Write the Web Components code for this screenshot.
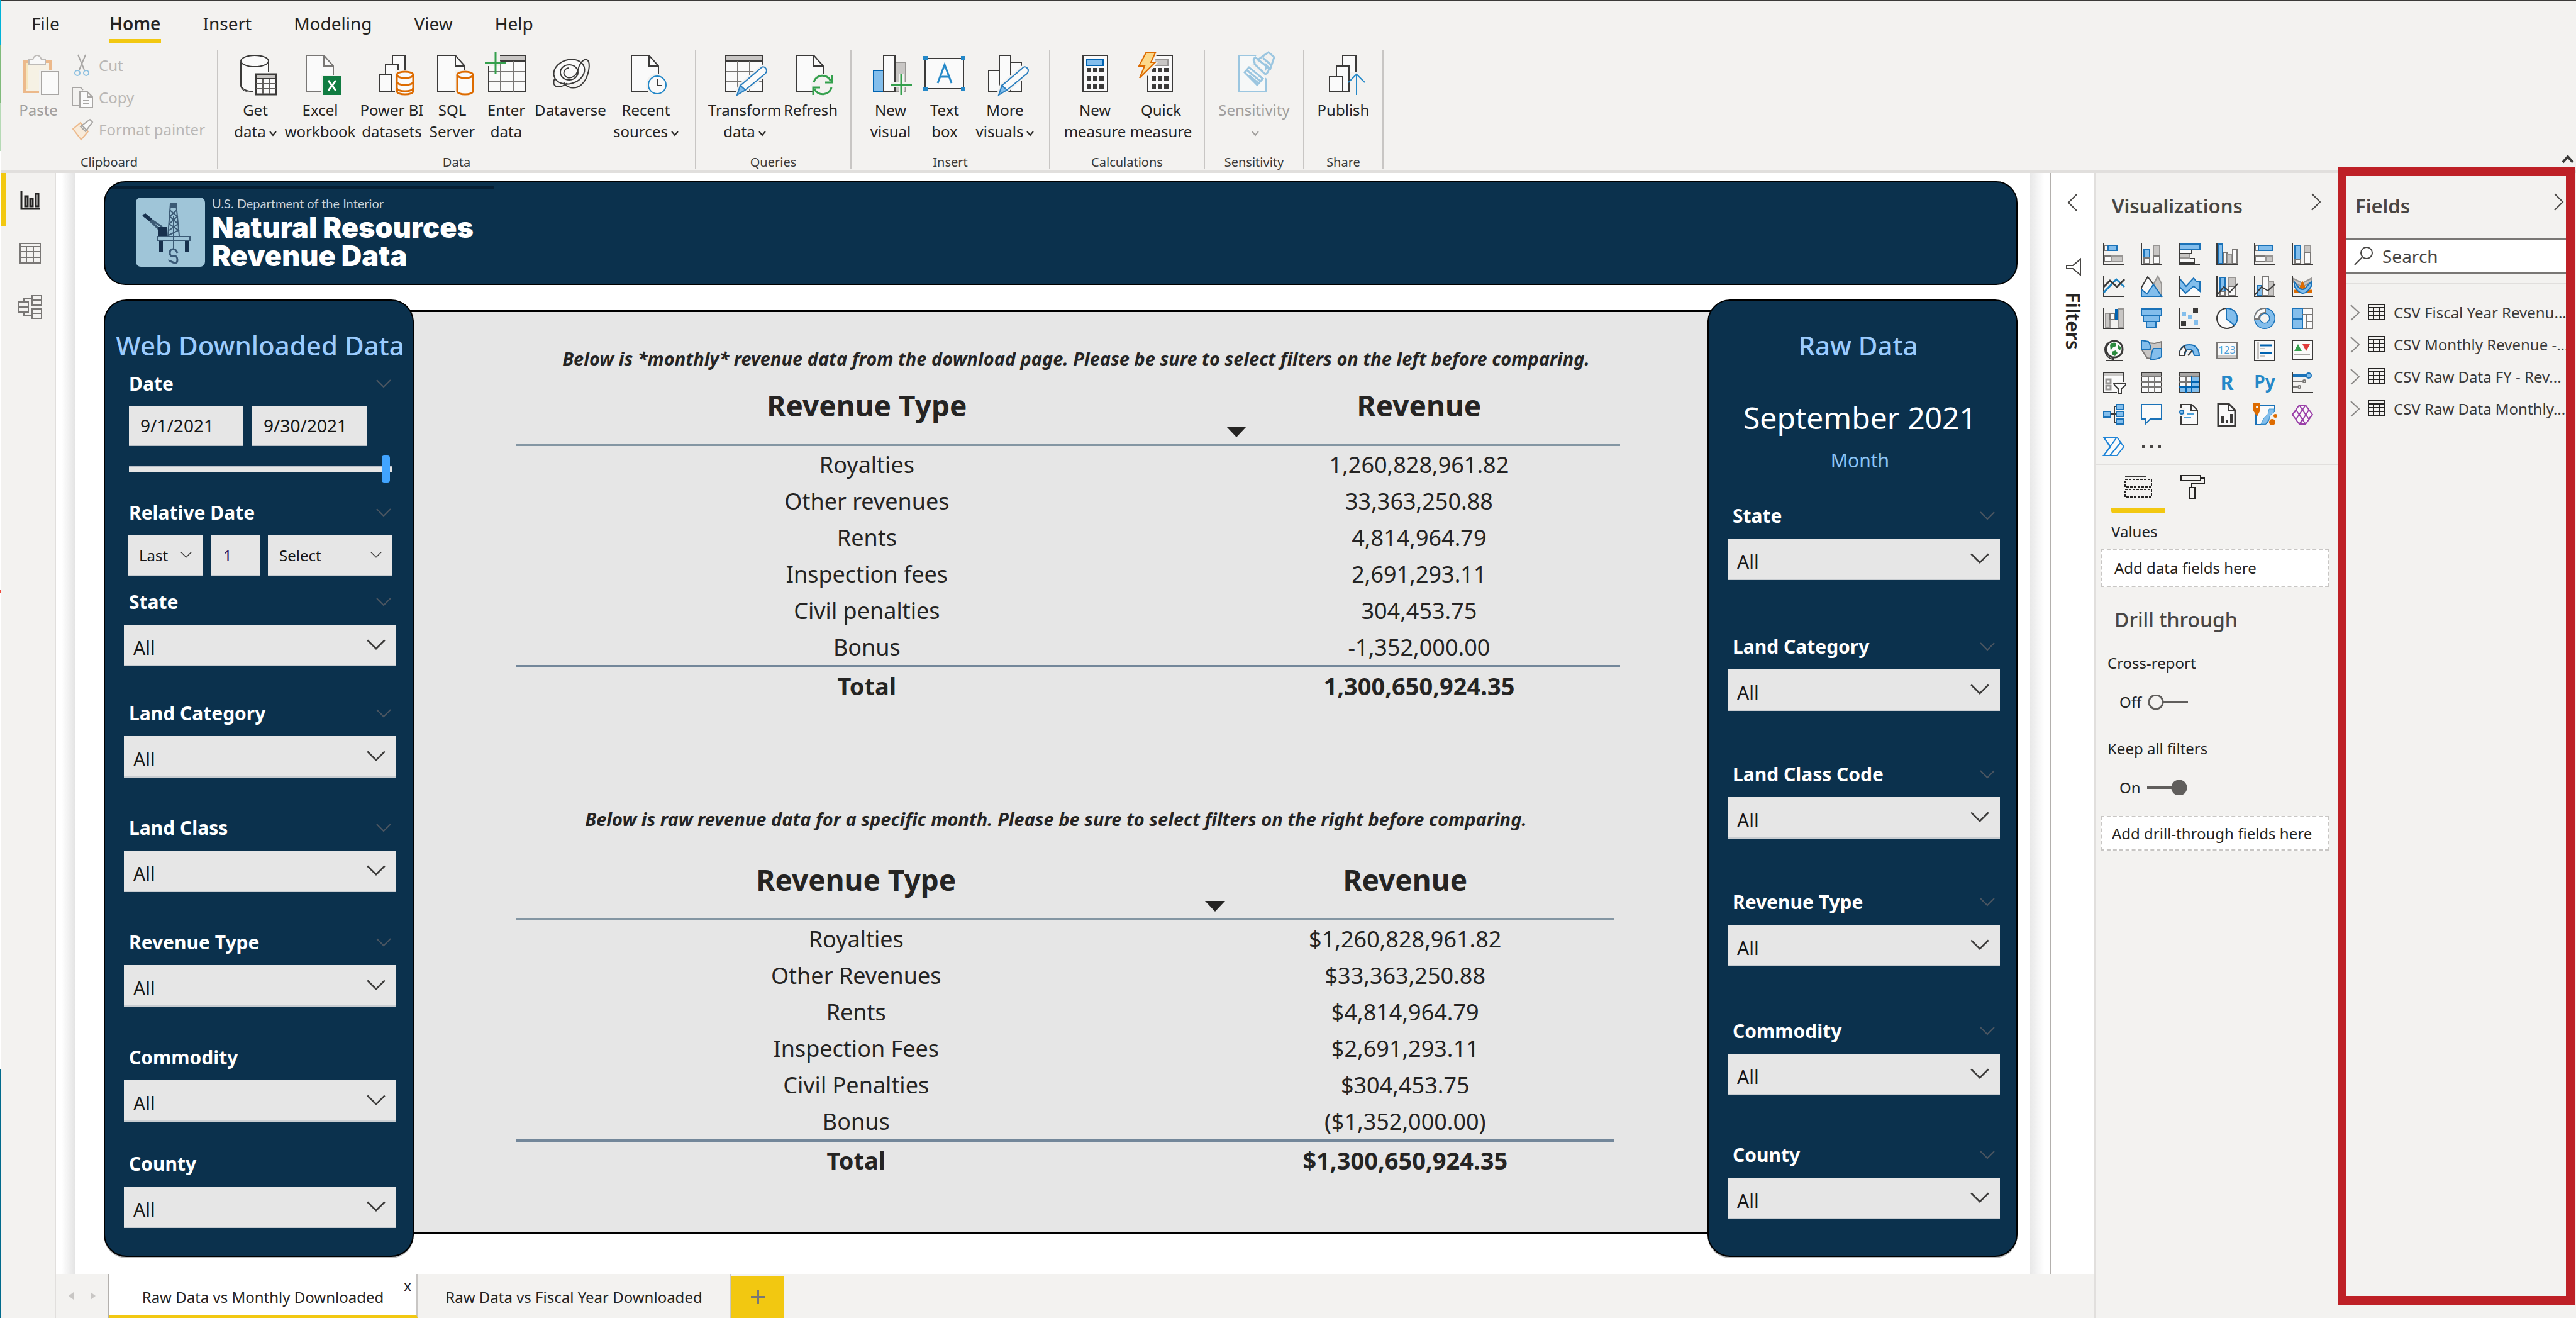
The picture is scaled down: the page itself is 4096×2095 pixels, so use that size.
<!DOCTYPE html>
<html lang="en">
<head>
<meta charset="utf-8">
<title>Natural Resources Revenue Data</title>
<style>
html, body { margin: 0; height: 100%; }
body { font-family: "Noto Sans", "Open Sans", sans-serif; font-size: 24px; color: #252423; background: #f3f2f0; overflow: hidden; }
</style>
</head>
<body>
<report-app></report-app>
<script>
const K = '#3b3a39', G = '#979593';
const bar = (x, y, w, h, f, s, sw = 2) => `<rect x="${x}" y="${y}" width="${w}" height="${h}" fill="${f}" stroke="${s}" stroke-width="${sw}"/>`;
const blue = (x, y, w, h) => bar(x, y, w, h, '#83beec', '#1a72b8');
const grey = (x, y, w, h) => bar(x, y, w, h, '#c8c6c4', G);
const white = (x, y, w, h, s = '#797775') => bar(x, y, w, h, '#fafafa', s);
const line = (d, s = K, w = 2, f = 'none') => `<path d="${d}" fill="${f}" stroke="${s}" stroke-width="${w}"/>`;
const axis = line('M1 0V33H34');
const doc = (x, s = K) => line(`M${x} 1H${x + 28}L${x + 43} 18V59H${x}Z`, s, 2, '#fafafa') + line(`M${x + 28} 1V18H${x + 43}`, s);
const keys = x => [21, 34, 47].map(y => [0, 10, 20].map(d => `<rect x="${x + d}" y="${y}" width="7" height="7" fill="${K}"/>`).join('')).join('');
const cyl = (x, y, w, h, rings = '') => line(`M${x} ${y + 5}a${w / 2} 5 0 0 1 ${w} 0V${y + h - 5}a${w / 2} 5 0 0 1 ${-w} 0Z`, '#dd6b00', 3, '#fafafa') + line(`M${x} ${y + 5}a${w / 2} 5 0 0 0 ${w} 0` + rings, '#dd6b00', 3);
const pencil = x => line(`M${x + 37} 22q4 -5 8 -1q4 4 0 9L${x + 13} 56L${x} 64L${x + 5} 49Z`, '#f3f2f0', 7, '#fafafa') + line(`M${x + 37} 22q4 -5 8 -1q4 4 0 9L${x + 13} 56L${x + 5} 49Z`, '#2b7fbf', 2, '#fafafa') + line(`M${x + 5} 49L${x + 13} 56L${x} 64Z`, '#2b7fbf', 2, '#83beec');
const I = {
  getdata: [64, line('M9 11V48q0 9 14 11h7', K, 2, '#fafafa') + `<path d="M9 11h44v38H32v10H23Q9 57 9 48Z" fill="#fafafa"/>` + line('M9 11V48q1 9 20 11M53 11V28') + `<ellipse cx="31" cy="10" rx="22" ry="9" fill="#fafafa" stroke="${K}" stroke-width="2"/>` + bar(33, 31, 32, 32, '#fafafa', K, 3) + '<rect x="34" y="32" width="30" height="5" fill="#c8c6c4"/>' + line('M33 38H65') + line('M33 46H65M33 54H65M44 38V63M54 38V63', '#605e5c')],
  excel: [64, doc(10, '#797775') + '<rect x="34" y="32" width="34" height="34" fill="#f3f2f0"/><rect x="36" y="34" width="30" height="30" fill="#107c41"/>' + line('M45 41L57 57M57 41L45 57', '#fff', 3)],
  powerbi: [64, white(33, 1, 20, 58, K) + white(22, 16, 20, 43, K) + white(12, 31, 20, 28, K) + '<rect x="37" y="24" width="30" height="40" fill="#f3f2f0"/>' + cyl(40, 27, 26, 36, 'M40 43a13 5 0 0 0 26 0M40 53a13 5 0 0 0 26 0')],
  sql: [64, doc(9) + '<rect x="37" y="25" width="30" height="40" fill="#f3f2f0"/>' + cyl(40, 27, 25, 36)],
  enter: [64, white(4, 1, 58, 58, K) + '<rect x="22" y="2" width="39" height="8" fill="#c8c6c4"/>' + line('M22 10H62') + line('M4 27H62M4 42H62M23 10V59M43 10V59', '#797775') + '<path d="M-3 -4H22V18H-3Z" fill="#f3f2f0"/>' + line('M-2 13H31M15 -4V30', '#34a04d', 3)],
  dataverse: [64, `<g fill="none" stroke="${K}" stroke-width="2"><ellipse cx="30" cy="27" rx="25" ry="19" fill="#fafafa" transform="rotate(-18 30 27)"/><ellipse cx="30" cy="28" rx="14" ry="12"/><path d="M30 21c-9 0-12 12-3 15c6 2 15-2 17-12c2-9 8-18 14-16c8 3 3 30-9 40c-10 8-24 5-28-5M7 38c-4 8 0 14 8 13c6-1 9-4 12-6"/></g>`],
  recent: [64, doc(9) + '<circle cx="50" cy="48" r="18" fill="#f3f2f0"/><circle cx="50" cy="48" r="14" fill="#fafafa" stroke="#2488c8" stroke-width="2"/>' + line('M50 39V49H57')],
  transform: [64, white(2, 1, 58, 58, K) + '<rect x="3" y="2" width="56" height="8" fill="#c8c6c4"/>' + line('M2 10H60') + line('M2 27H60M2 42H60M21 10V59M40 10V59', '#797775') + pencil(20)],
  refresh: [64, doc(9) + '<circle cx="51" cy="48" r="18" fill="#f3f2f0"/>' + line('M37 44a14 13 0 0 1 27 -2M66 32V44H55M65 52a14 13 0 0 1 -27 2M36 64V52H47', '#34a04d', 3)],
  newvisual: [64, bar(5, 25, 16, 34, '#83beec', '#0063b1') + grey(40, 12, 16, 47) + white(21, 1, 18, 58, K) + line('M32 48H66M49 31V65', '#f3f2f0', 8) + line('M33 48H66M49 31V64', '#34a04d', 3)],
  textbox: [64, white(1, 6, 61, 48, K) + line('M21 45L32 16L43 45M25 35H39', '#2488c8', 3) + '<path d="M-2 2h7v7h-7zM58 2h7v7h-7zM-2 51h7v7h-7zM58 51h7v7h-7z" fill="#2488c8"/>'],
  morevisuals: [64, white(6, 25, 17, 34, K) + white(41, 12, 17, 47, K) + white(23, 1, 18, 58, K) + pencil(22)],
  measure: [64, white(13, 1, 39, 58, K) + bar(19, 8, 26, 9, '#83beec', '#0063b1') + keys(19)],
  quick: [64, white(11, 1, 39, 58, K) + grey(17, 8, 26, 9) + keys(17) + '<path d="M6 -4H26L22 12H27L4 42H-6Z" fill="#f3f2f0"/>' + line('M8 -3H23L16 12H23L-2 37L6 18H-3Z', '#dd6b00', 2, '#fcd98a')],
  sensitivity: [64, bar(8, 1, 43, 58, '#f6f8f8', '#9bc6e0') + line('M36 -3L62 18M54 -3L32 17L51 32L64 10L49 -4', '#f3f2f0', 8) + line('M17 28L24 20L46 38L37 48ZM24 33L40 46M20 24L42 42M33 13Q29 8 34 4L56 22Q54 30 50 31L33 15ZM38 8L55 -4L64 4L58 22L38 8M46 5L60 17', '#9bc6e0', 3)],
  publish: [64, white(31, 1, 21, 58, K) + white(21, 18, 20, 41, K) + white(10, 35, 21, 24, K) + '<path d="M43 28H64V64H43Z" fill="#f3f2f0"/>' + line('M53 64V31M40 44L53 31L66 44', '#2488c8')],
  paste: [64, bar(10, 11, 41, 48, '#f6f1e4', '#ecb98b', 4) + line('M14 13V55', '#f5e6be', 4) + '<rect x="33" y="24" width="34" height="42" fill="#f3f2f0"/>' + line('M17 15V8H23Q25 1 30 1T37 8H43V15Z', '#bebbb8', 2, '#f8f8f8') + bar(37, 27, 27, 36, '#fafafa', '#a8a6a4')],
  cut: [34, line('M10 0L20 24M22 0L12 24', '#a8a6a4') + '<circle cx="9" cy="29" r="4" fill="none" stroke="#8ec0e0" stroke-width="2"/><circle cx="23" cy="29" r="4" fill="none" stroke="#8ec0e0" stroke-width="2"/>'],
  copy: [34, line('M12 30H1V1H14L18 5', '#a8a6a4') + line('M13 8H25L33 16V33H13ZM25 8V16H33M18 22H28M18 27H28', '#a8a6a4', 2, '#fafafa')],
  painter: [34, line('M2 16L14 6L26 20L15 33Z', '#ecb98b', 2, '#f8ebda') + line('M14 12L29 1L33 5L22 20Z', '#a8a6a4', 2, '#f8f8f8') + line('M16 10L24 18', '#a8a6a4')],
  report: [38, line('M5 4V33H34', '#252423', 3) + line('M11 13H15V29H11ZM19 17H23V29H19ZM28 9H32V29H28Z', '#252423', 3)],
  data: [38, line('M3 3H35V34H3ZM3 8H35M3 16H35M3 25H35M13 8V34M24 8V34', '#797775')],
  model: [38, line('M1 11H16V27H1ZM1 19H16M22 1H37V16H22ZM22 8H37M22 22H37V37H22ZM22 29H37M9 11V6H22M9 27V33H22', '#797775')],
  stackbar: [34, axis + white(2, 3, 6, 8) + blue(8, 3, 14, 8) + white(2, 20, 12, 9) + grey(14, 20, 17, 9)],
  stackcol: [34, axis + blue(5, 9, 9, 14) + white(5, 23, 9, 9) + grey(20, 3, 10, 17) + white(20, 20, 10, 12)],
  clusbar: [34, white(2, 24, 23, 7, K) + grey(2, 16, 15, 7) + white(2, 9, 19, 7, K) + blue(2, 1, 32, 8) + axis],
  cluscol: [34, axis + blue(3, 1, 7, 31) + white(11, 14, 6, 18) + grey(18, 18, 6, 14) + white(26, 9, 7, 23)],
  fullbar: [34, axis + white(2, 3, 5, 8) + blue(7, 3, 23, 8) + white(2, 20, 17, 9) + grey(19, 20, 11, 9)],
  fullcol: [34, axis + blue(5, 3, 9, 23) + white(5, 26, 9, 6) + grey(20, 3, 10, 11) + white(20, 14, 10, 18)],
  linec: [34, axis + line('M1 27L21 6L34 18', '#1f85c4', 3) + line('M1 18L11 8L22 18L34 6', K, 3)],
  area: [34, line('M1 19L11 2L21 15L10 30L1 24Z', K, 2, '#fafafa') + line('M20 14L27 1L33 13V33Z', G, 2, '#c8c6c4') + line('M1 33V22L10 29L20 14L33 33Z', '#1a72b8', 2, '#83beec')],
  stackarea: [34, '<path d="M1 17L11 28L24 17L34 26V33H1Z" fill="#fafafa"/>' + line('M1 4L12 17L24 4L28 9H34V25L24 17L11 28L1 17', '#1a72b8', 2, '#83beec') + axis],
  linestack: [34, axis + blue(6, 3, 8, 22) + white(6, 25, 8, 7) + grey(20, 3, 10, 14) + white(20, 17, 10, 15) + line('M1 31L12 18L22 26L34 13')],
  lineclus: [34, axis + blue(5, 16, 8, 16) + white(14, 1, 9, 31) + grey(23, 9, 8, 23) + line('M1 31L12 18L22 24L34 13')],
  ribbon: [34, line('M3 5L17 12L32 4V10L17 18L3 11Z', G, 2, '#c8c6c4') + line('M4 25H12L17 14L22 25H32', '#dd6b00', 5) + line('M4 10V17Q10 27 17 28T31 17V10L25 16Q22 22 17 22T9 16Z', '#1a72b8', 2, '#83beec') + axis],
  waterfall: [34, axis + grey(4, 9, 7, 23) + white(11, 9, 7, 10) + '<rect x="19" y="2" width="5" height="18" fill="#0063b1"/>' + grey(24, 2, 9, 30)],
  funnel: [34, blue(1, 2, 32, 10) + blue(4, 12, 26, 10) + blue(9, 22, 15, 10)],
  scatter: [34, axis + '<path d="M23 1h8v8h-8zM4 21h8v8h-8z" fill="#3b3a39"/><path d="M5 7h7v7H5zM15 12h6v6h-6zM24 20h7v7h-7z" fill="#83beec"/>'],
  pie: [34, `<circle cx="17" cy="17" r="16" fill="#fafafa" stroke="${K}" stroke-width="2"/>` + line('M16 1A16 16 0 0 1 29 28L16 18Z', '#1a72b8', 2, '#83beec')],
  donut: [34, `<circle cx="17" cy="17" r="12" fill="none" stroke="#1a72b8" stroke-width="10"/><circle cx="17" cy="17" r="12" fill="none" stroke="#83beec" stroke-width="7"/>` + line('M1 18A16 16 0 0 1 18 1V8A9 9 0 0 0 8 18Z', '#797775', 2, '#fafafa')],
  treemap: [34, white(1, 1, 32, 32) + blue(1, 1, 16, 17) + blue(1, 18, 16, 15) + line('M17 11H33M24 11V33M24 22H33', '#797775')],
  map: [34, `<circle cx="18" cy="15" r="13" fill="#fafafa" stroke="${K}" stroke-width="3"/><path d="M11 8q5-5 9-3l1 5l-5 2l-4 5zM23 8l6 4l-2 5l-4-3zM14 19l6-2l3 4l-4 5l-5-3z" fill="#2b8a3e"/>` + line('M8 5A15 15 0 0 0 16 31M16 28V33M5 33H31')],
  filled: [34, line('M12 5L22 6L33 3V16L16 30L10 29L1 15H15Z', '#797775', 2, '#c8c6c4') + line('M1 1L12 3Q17 10 14 16H1Z', '#1a72b8', 2, '#83beec') + line('M20 14H33V27Q26 32 16 31L17 22Z', '#1a72b8', 2, '#83beec')],
  gauge: [34, line('M1 25Q2 8 17 8T33 25H25Q23 15 17 15T10 25Z', '#1a72b8', 2, '#83beec') + line('M1 25Q1 15 9 10L12 17Q9 20 9 25ZM15 25L22 17', K, 2, '#fafafa')],
  card: [34, white(1, 4, 32, 26) + '<rect x="2" y="24" width="30" height="5" fill="#c8c6c4"/><text x="17" y="22" font-size="16" text-anchor="middle" fill="#4ba0d8">123</text>'],
  multirow: [34, white(1, 1, 32, 32, K) + '<rect x="4" y="4" width="4" height="26" fill="#c8c6c4"/>' + line('M9 9H29M9 21H28', '#0063b1', 3) + line('M9 14H18M9 26H18', '#c8c6c4')],
  kpi: [34, white(1, 1, 32, 31, K) + '<path d="M4 18L10 7L16 18Z" fill="#34a04d"/><path d="M17 7H29L23 18Z" fill="#e03a3a"/>' + line('M4 24H29', '#a8a6a4')],
  slicer: [34, white(1, 1, 32, 32, K) + '<rect x="2" y="2" width="30" height="4" fill="#c8c6c4"/>' + line('M5 12H12V18H5ZM5 22H12V28H5Z', G, 3) + '<path d="M22 16H38V38H22Z" fill="#f3f2f0"/>' + line('M17 18H36V21L29 27V35H24V27L18 21Z', K, 2, '#fafafa')],
  table: [34, white(1, 1, 32, 32, K) + '<rect x="2" y="2" width="30" height="4" fill="#a8a6a4"/>' + line('M1 7H33M1 16H33M1 24H33M12 7V33M22 7V33', '#797775')],
  matrix: [34, white(1, 1, 32, 32, K) + '<rect x="2" y="2" width="30" height="4" fill="#a8a6a4"/><path d="M21 7H32V32H2V24H21Z" fill="#83beec"/>' + line('M1 7H33M1 16H21M12 7V24', '#797775') + line('M21 7V33M1 24H33M12 24V33M21 16H33', '#0063b1')],
  r: [34, '<text x="17" y="29" font-size="32" font-weight="700" text-anchor="middle" fill="#2488c8">R</text>'],
  py: [34, '<text x="17" y="26" font-size="28" font-weight="700" text-anchor="middle" fill="#2488c8">Py</text>'],
  keyinf: [34, axis + line('M2 6H23', '#1a72b8', 4) + '<circle cx="27" cy="6" r="4" fill="#83beec" stroke="#1a72b8" stroke-width="2"/>' + line('M2 15H17M2 24H9', '#797775') + '<circle cx="20" cy="15" r="2" fill="none" stroke="#797775" stroke-width="2"/><circle cx="12" cy="24" r="2" fill="none" stroke="#797775" stroke-width="2"/>'],
  decomp: [34, line('M12 16H21M22 4H18V29H22') + blue(1, 12, 11, 9) + blue(21, 1, 12, 8) + blue(21, 12, 12, 8) + blue(21, 24, 12, 8)],
  qa: [34, line('M1 1H33V24H15L7 32V24H1Z', '#1a72b8', 2, '#fafafa')],
  narrative: [34, line('M4 1H21L30 10V33H4Z', K, 2, '#fafafa') + line('M20 1V10H30') + '<rect x="0" y="6" width="10" height="14" fill="#f3f2f0"/><circle cx="5" cy="13" r="3" fill="#83beec" stroke="#1a72b8" stroke-width="2"/>' + line('M13 16H24M9 22H20', '#4ba0d8')],
  paginated: [34, line('M3 0H20L30 10V35H3Z', K, 3, '#fafafa') + line('M19 0V11H30') + line('M10 30V20M17 30V25M24 30V16', K, 4)],
  arcgis: [34, line('M3 2H33V12Q24 10 24 20T16 33H3Z', '#1a72b8', 2, '#fafafa') + line('M24 8H32V13Q24 18 24 24L18 32H11Q16 20 22 17Z', '#4ba0d8', 1, '#83beec') + '<path d="M-1-2h11v12l-5 10l-6-9z" fill="#dd6b00"/><circle cx="5" cy="5" r="2" fill="#fafafa"/><circle cx="29" cy="29" r="5" fill="#dd6b00"/><circle cx="34" cy="19" r="3" fill="#dd6b00"/>'],
  apps: [34, line('M12 2H22L33 17L22 32H12L1 17ZM12 2L27 24M22 2L7 24M12 32L18 23M27 10L13 32M22 32L7 10M1 17L7 10M33 17L27 24', '#9a3fa8', 2, '#fafafa')],
  automate: [34, line('M1 2H22L33 17L22 31H1L12 17Z', '#1f85d8', 2, '#fafafa') + line('M1 31L22 2M11 31L29 9M1 2L11 17', '#1f85d8')],
  more: [34, '<path d="M2 14h4v5H2zM15 14h4v5h-4zM28 14h4v5h-4z" fill="#484644"/>'],
  fieldswell: [44, line('M1 3H35') + `<path d="M1 8H43V20H1ZM1 24H43V36H1Z" fill="none" stroke="#252423" stroke-width="2" stroke-dasharray="4 2"/>`],
  roller: [44, line('M4 2H35V10H4ZM35 6H41V15H21V21M17 21H26V38H17Z', '#252423')],
  crane: [110, '<g stroke="#3b5a75" fill="none" stroke-width="2"><path d="M55 10L51 61M64 10L69 61M54 10H65M54 20L66 30L53 42L68 52L52 60M65 20L54 30L67 42L53 52"/><path d="M12 27L36 50M12 27L42 47M20 32L38 52" stroke-width="3"/><path d="M34 62H86V68H34Z"/><path d="M60 30V84"/></g><path d="M54 9H65V16H54Z" fill="#3b5a75"/><path d="M10 29L15 25L26 34L22 38ZM36 47H49V61H36ZM37 69H43V86H37ZM78 69H85V86H78Z" fill="#17304d"/><path d="M66 88Q64 82 59 82T54 88T60 93T66 99T59 103T53 99" fill="none" stroke="#3a5a78" stroke-width="3"/>'],
  down: [24, line('M1 6L12 17L23 6', 'currentColor')],
  caret: [12, line('M1 3L6 9L11 3', 'currentColor')],
  left: [28, line('M20 1L7 14L20 27', 'currentColor')],
  right: [28, line('M8 1L21 14L8 27', 'currentColor')],
  collapse: [20, line('M2 15L10 6L18 15', '#3b3a39', 4)],
  funnelside: [28, line('M26 1V26L14 16H4V11H14Z', '#484644', 2, '#fff')],
  search: [32, '<circle cx="20" cy="11" r="9" fill="none" stroke="#484644" stroke-width="2"/>' + line('M13 18L1 30', '#484644')],
  grid: [30, line('M2 2H28V26H2ZM2 7H28M2 13H28M2 19H28M10 7V26M19 7V26', '#252423')],
  expand: [26, line('M-1 1L12 13L-1 25', '#8a8886')],
  prev: [14, '<path d="M11 1V13L3 7Z" fill="#c8c6c4"/>'],
  next: [14, '<path d="M3 1V13L11 7Z" fill="#c8c6c4"/>'],
  plus: [24, line('M12 1V23M1 12H23', '#797775', 4)],
  sort: [34, '<path d="M1 4H33L17 21Z" fill="#252423"/>'],
};
const ic = (n, s) => `<svg-icon name="${n}"${s ? ` size="${s}"` : ''}></svg-icon>`;

function define(tag, css, html) {
  customElements.define(tag, class extends HTMLElement {
    connectedCallback() {
      if (this.shadowRoot) return;
      const t = document.createElement('template');
      t.innerHTML = `<style>*{box-sizing:border-box}button,input,select{font:inherit;color:inherit;border:0;border-radius:0;margin:0;padding:0;background:none}a{color:inherit;text-decoration:none}${css}</style>` + (typeof html === 'function' ? html(this) : html);
      this.attachShadow({ mode: 'open' }).append(t.content.cloneNode(true));
    }
  });
}

define('svg-icon', ':host{display:block;flex:none;line-height:0}svg{display:block;overflow:visible}', el => {
  const [vb, body] = I[el.getAttribute('name')];
  const s = el.getAttribute('size') || vb;
  return `<svg width="${s}" height="${s}" viewBox="0 0 ${vb} ${vb}" aria-hidden="true">${body}</svg>`;
});

/* Ribbon */
define('menu-tabs', `:host{display:block}
nav{display:flex;padding:15px 0 0 48px;gap:67px;height:77px;font-size:28px;line-height:40px}
a{height:51px;white-space:nowrap}a:first-child{margin-right:12px}
a.on{font-weight:600;border-bottom:6px solid #f2c811}`,
`<nav><a href="#">File</a><a href="#" class="on">Home</a><a href="#">Insert</a><a href="#">Modeling</a><a href="#">View</a><a href="#">Help</a></nav>`);

define('ribbon-button', `:host{display:block}
button{display:flex;flex-direction:column;align-items:center;gap:7px;width:100%;line-height:34px;white-space:nowrap}
:host([disabled]){color:#a19f9d}.l{display:block;text-align:center}.l svg-icon{display:inline-block;margin-left:5px}`,
el => `<button>${ic(el.getAttribute('icon'))}<span class="l"><slot></slot>${el.hasAttribute('menu') ? ic('caret') : ''}</span></button>`);

define('ribbon-group', `:host{display:flex;flex-direction:column;border-right:2px solid #c8c6c4;height:189px;padding-top:8px}
.items{display:grid;grid-template-columns:var(--cols,1fr);padding-left:var(--lead,0);flex:1;align-items:start}
.name{font-size:20px;line-height:20px;text-align:center;color:#3b3a39}`,
el => `<div class="items"><slot></slot></div><div class="name">${el.getAttribute('label')}</div>`);

define('clipboard-tools', `:host{display:grid;gap:17px;color:#b9b7b5}
button{display:flex;align-items:center;gap:9px;height:34px;line-height:34px;white-space:nowrap}`,
`<button>${ic('cut')}Cut</button><button>${ic('copy')}Copy</button><button>${ic('painter')}Format painter</button>`);

define('app-ribbon', `:host{display:block;border-top:2px solid #3b3a39;border-bottom:4px solid #e1dfdd;height:275px}
.row{display:flex;height:192px}.end{margin-left:auto;align-self:end;padding:0 3px 8px 0}`,
`<menu-tabs></menu-tabs><div class="row">
<ribbon-group label="Clipboard" style="width:345px;--cols:106px 1fr;--lead:6px"><ribbon-button icon="paste" disabled>Paste</ribbon-button><clipboard-tools></clipboard-tools></ribbon-group>
<ribbon-group label="Data" style="width:760px;--cols:90px 116px 112px 80px 92px 112px 128px;--lead:14px">
<ribbon-button icon="getdata" menu>Get<br>data</ribbon-button><ribbon-button icon="excel">Excel<br>workbook</ribbon-button><ribbon-button icon="powerbi">Power BI<br>datasets</ribbon-button><ribbon-button icon="sql">SQL<br>Server</ribbon-button><ribbon-button icon="enter">Enter<br>data</ribbon-button><ribbon-button icon="dataverse">Dataverse</ribbon-button><ribbon-button icon="recent" menu>Recent<br>sources</ribbon-button></ribbon-group>
<ribbon-group label="Queries" style="width:247px;--cols:112px 98px;--lead:21px"><ribbon-button icon="transform" menu>Transform<br>data</ribbon-button><ribbon-button icon="refresh">Refresh</ribbon-button></ribbon-group>
<ribbon-group label="Insert" style="width:316px;--cols:88px 84px 108px;--lead:18px"><ribbon-button icon="newvisual">New<br>visual</ribbon-button><ribbon-button icon="textbox">Text<br>box</ribbon-button><ribbon-button icon="morevisuals" menu>More<br>visuals</ribbon-button></ribbon-group>
<ribbon-group label="Calculations" style="width:246px;--cols:104px 106px;--lead:19px"><ribbon-button icon="measure">New<br>measure</ribbon-button><ribbon-button icon="quick">Quick<br>measure</ribbon-button></ribbon-group>
<ribbon-group label="Sensitivity" style="width:158px"><ribbon-button icon="sensitivity" menu disabled>Sensitivity<br></ribbon-button></ribbon-group>
<ribbon-group label="Share" style="width:126px"><ribbon-button icon="publish">Publish</ribbon-button></ribbon-group>
<button class="end" aria-label="Collapse ribbon">${ic('collapse')}</button></div>`);

/* Left rail */
define('view-rail', `:host{display:flex;flex-direction:column;width:87px;border-right:2px solid #e1dfdd}
button{height:85px;display:grid;place-items:center;border-left:7px solid transparent}button.on{border-left-color:#f2c811}`,
`<button class="on" aria-label="Report">${ic('report')}</button><button aria-label="Data">${ic('data')}</button><button aria-label="Model">${ic('model')}</button>`);

/* Report page */
define('report-banner', `:host{display:flex;align-items:center;gap:11px;height:165px;padding:0 49px;background:linear-gradient(#061e33,#061e33) 0 5px/619px 6px no-repeat #0b314d;border:2px solid #000;border-radius:34px;color:#fff;overflow:hidden}
.logo{width:110px;height:110px;border-radius:8px;background:#9fc5d8;flex:none;margin-top:-4px}
.dept{font:20px/26px Lato,"Open Sans",sans-serif;color:#c7d3dc}
.name{font:900 45px/45px Inter,sans-serif;margin:0;padding-top:3px}.text{margin-top:-2px}`,
`<div class="logo">${ic('crane')}</div><div class="text"><div class="dept">U.S. Department of the Interior</div><h1 class="name">Natural Resources<br>Revenue Data</h1></div>`);

define('drop-down', `:host{display:grid;height:66px;background:#e6e6e6;color:#161616;border-bottom:2px solid #c9cdd1;font-size:30px}
select,svg-icon{grid-area:1/1}
select{appearance:none;width:100%;height:100%;padding:9px 15px 0;outline:0}
svg-icon{justify-self:end;align-self:center;margin-right:17px;pointer-events:none;color:#3b3a39}
:host([small]){font-size:24px}:host([small]) select{padding:0 18px}`,
el => `<select aria-label="${el.getAttribute('label')}"><option>${el.getAttribute('value')}</option></select>${el.hasAttribute('small') ? ic('down', 18) : ic('down', 30)}`);

define('slicer-title', `:host{display:flex;align-items:center;justify-content:space-between;height:44px;padding:0 8px;font-weight:700;font-size:30px;line-height:46px;color:#fff}
svg-icon{color:#4c5661}`, el => `<slot></slot>${el.hasAttribute('plain') ? '' : ic('down')}`);

define('list-slicer', `:host{display:flex;flex-direction:column;gap:14px}`,
el => `<slicer-title${el.hasAttribute('plain') ? ' plain' : ''}>${el.getAttribute('label')}</slicer-title><drop-down label="${el.getAttribute('label')}" value="All"></drop-down>`);

define('date-slicer', `:host{display:block}
.dates{display:flex;gap:14px;padding:13px 8px 14px}
.dates input{width:182px;height:64px;padding:0 18px;background:#e6e6e6;font-size:28px;color:#161616;border-bottom:2px solid #b8bec4}
.range{appearance:none;display:block;width:calc(100% - 14px);height:43px;margin-left:8px}
.range::-webkit-slider-runnable-track{height:10px;background:#e6e6e6;border-top:3px solid #b8bec8}
.range::-webkit-slider-thumb{appearance:none;width:13px;height:43px;margin-top:-19px;border-radius:4px;background:#41a4ff}`,
`<slicer-title>Date</slicer-title><div class="dates"><input aria-label="Start date" value="9/1/2021"><input aria-label="End date" value="9/30/2021"></div><input class="range" type="range" aria-label="Date range" value="99">`);

define('relative-slicer', `:host{display:block}
.row{display:grid;grid-template-columns:119px 78px 1fr;gap:13px;padding:13px 6px 0}
input{width:100%;height:66px;background:#e6e6e6;padding:0 20px;font-size:24px;color:#32145a;border-bottom:2px solid #c9cdd1}`,
`<slicer-title>Relative Date</slicer-title><div class="row"><drop-down small label="Direction" value="Last"></drop-down><input aria-label="Count" value="1"><drop-down small label="Unit" value="Select"></drop-down></div>`);

define('filter-panel', `:host{display:block;width:493px;flex:none;background:#0b314d;border:2px solid #000;border-radius:36px;padding:41px 26px 0 30px;position:relative;z-index:1;box-shadow:0 2px 0 #bbb}
h2{margin:0 -20px;padding-right:var(--shift,0);font-weight:500;font-size:42px;line-height:60px;text-align:center;color:#9bcbfd;white-space:nowrap}`,
el => `<h2>${el.getAttribute('label')}</h2><slot></slot>`);

define('slicer-stack', `:host{display:grid;align-content:start;grid-template-rows:var(--rows)}`, '<slot></slot>');

define('month-card', `:host{display:block;text-align:center;color:#fff;font-size:48px;line-height:64px;padding:53px 12px 0 0}
small{display:block;margin-top:16px;font-size:30px;line-height:40px;color:#8ec6f7}`, '<slot></slot><small>Month</small>');

define('revenue-table', `:host{display:block}
table{width:100%;border-spacing:0;table-layout:fixed;text-align:center;font-size:36px}
th,td{padding:0;font-weight:400}tbody th,tbody td{height:58px;line-height:56px;padding-top:2px}
thead th{height:95px;vertical-align:top;font-weight:700;font-size:46px;line-height:60px;border-bottom:4px solid #8496a3}
tfoot th,tfoot td{font-weight:700;font-size:38px;height:62px;line-height:58px;border-top:4px solid #73879a}
button{display:block;height:30px;padding-left:12px}`,
el => {
  const rows = JSON.parse(el.getAttribute('rows')), last = rows.pop();
  const tr = ([a, b]) => `<tr><th scope="row">${a}</th><td>${b}</td></tr>`;
  return `<table><colgroup><col style="width:${el.getAttribute('split')}"><col></colgroup><thead><tr><th>Revenue Type</th><th>Revenue<button aria-label="Sort">${ic('sort')}</button></th></tr></thead><tbody>${rows.map(tr).join('')}</tbody><tfoot>${tr(last)}</tfoot></table>`;
});

define('report-page', `:host{display:flex;flex-direction:column;flex:1;min-width:0;padding:13px 20px 27px 46px;background:#fff;gap:23px}
.cols{display:flex;flex:1;min-height:0}
.mid{flex:1;min-width:0;margin:17px -12px 37px;border:solid #000;border-width:3px 0;background:#e6e6e6;padding:53px 151px 0 174px}
.note{margin:0 0 25px;font-weight:700;font-style:italic;font-size:29px;line-height:42px;height:40px;text-align:center;padding-left:26px;white-space:nowrap}
.second{margin:162px 0 47px;padding:0 38px 0 0}
.b{margin-right:10px}`,
`<report-banner></report-banner><div class="cols">
<filter-panel label="Web Downloaded Data"><date-slicer style="margin-top:9px"></date-slicer><relative-slicer style="margin-top:27px"></relative-slicer>
<slicer-stack style="margin-top:19px;--rows:177px 182px 182px 183px 169px"><list-slicer label="State"></list-slicer><list-slicer label="Land Category"></list-slicer><list-slicer label="Land Class"></list-slicer><list-slicer label="Revenue Type"></list-slicer><list-slicer plain label="Commodity"></list-slicer><list-slicer plain label="County"></list-slicer></slicer-stack></filter-panel>
<section class="mid"><p class="note">Below is *monthly* revenue data from the download page. Please be sure to select filters on the left before comparing.</p>
<revenue-table split="63.6%" rows='[["Royalties","1,260,828,961.82"],["Other revenues","33,363,250.88"],["Rents","4,814,964.79"],["Inspection fees","2,691,293.11"],["Civil penalties","304,453.75"],["Bonus","-1,352,000.00"],["Total","1,300,650,924.35"]]'></revenue-table>
<p class="note second">Below is raw revenue data for a specific month. Please be sure to select filters on the right before comparing.</p>
<revenue-table class="b" split="62%" rows='[["Royalties","$1,260,828,961.82"],["Other Revenues","$33,363,250.88"],["Rents","$4,814,964.79"],["Inspection Fees","$2,691,293.11"],["Civil Penalties","$304,453.75"],["Bonus","($1,352,000.00)"],["Total","$1,300,650,924.35"]]'></revenue-table></section>
<filter-panel label="Raw Data" style="--shift:18px"><month-card>September 2021</month-card>
<slicer-stack style="margin-top:46px;--rows:208px 203px 203px 205px 197px"><list-slicer label="State"></list-slicer><list-slicer label="Land Category"></list-slicer><list-slicer label="Land Class Code"></list-slicer><list-slicer label="Revenue Type"></list-slicer><list-slicer label="Commodity"></list-slicer><list-slicer label="County"></list-slicer></slicer-stack></filter-panel></div>`);

define('filters-rail', `:host{display:flex;flex-direction:column;align-items:center;width:70px;background:#fff;border-left:2px solid #b3b0ad;padding-top:33px}
svg-icon{color:#484644}.f{margin-top:75px}
span{writing-mode:vertical-rl;font-weight:600;font-size:30px;line-height:40px;margin-top:26px}`,
`<button aria-label="Expand filters">${ic('left')}</button>${ic('funnelside').replace('<svg-icon', '<svg-icon class="f"')}<span>Filters</span>`);

define('page-tabs', `:host{display:flex;height:70px;line-height:68px}
.nav{width:85px;display:flex;align-items:center;justify-content:space-around;padding:0 6px;border-right:2px solid #b3b0ad}
.tab{border-right:2px solid #c8c6c4;text-align:center;white-space:nowrap;width:499px;padding-top:3px}
.on{width:490px;background:#fff;border-bottom:5px solid #f2c811;display:grid}
.on>*{grid-area:1/1}
.x{font-size:22px;line-height:30px;justify-self:end;align-self:start;padding-right:8px}
.add{width:83px;margin-top:4px;background:#f2c811;display:grid;place-items:center}`,
`<div class="nav"><button aria-label="Previous page">${ic('prev')}</button><button aria-label="Next page">${ic('next')}</button></div>
<div class="tab on"><a href="#">Raw Data vs Monthly Downloaded</a><button class="x" aria-label="Close page">x</button></div><a href="#" class="tab">Raw Data vs Fiscal Year Downloaded</a><button class="add" aria-label="New page">${ic('plus')}</button>`);

/* Right panes */
define('pane-header', `:host{display:flex;justify-content:space-between;height:103px;padding:1px 21px 0 26px;font-weight:600;font-size:31px;line-height:102px;color:#484644}
button{height:90px;color:#484644}`, `<slot></slot><button aria-label="Collapse pane">${ic('right')}</button>`);

define('toggle-row', `:host{display:flex;flex-direction:column;gap:28px;padding-left:19px;line-height:34px}
label{display:flex;align-items:center;gap:10px;padding-left:19px}
input{appearance:none;width:64px;height:24px;background:radial-gradient(circle at 13px 12px,#f3f2f0 9px,#605e5c 10px 12px,transparent 13px),linear-gradient(#605e5c,#605e5c) 0 10px/64px 4px no-repeat}
input:checked{background:radial-gradient(circle at 51px 12px,#605e5c 12px,transparent 13px),linear-gradient(#605e5c,#605e5c) 0 10px/64px 4px no-repeat}`,
el => { const on = el.hasAttribute('on'); return `<slot></slot><label>${on ? 'On' : 'Off'}<input type="checkbox"${on ? ' checked' : ''}></label>`; });

define('drop-well', `:host{display:flex;align-items:center;margin:0 14px 0 8px;background:#fff;border:2px dashed #c8c6c4;white-space:nowrap}`, '<slot></slot>');

define('viz-pane', `:host{display:block;width:387px;border-left:2px solid #e1dfdd}
.grid{display:grid;grid-template-columns:repeat(6,60px);grid-auto-rows:51px;height:361px;border-bottom:2px solid #e1dfdd;margin-left:-1px}
.grid button{display:grid;place-items:center}
.tabs{display:flex;padding-left:25px}.tabs button{width:86px;height:77px;display:grid;place-items:center;padding:6px 0 9px;border-radius:4px}
.tabs .on{background:linear-gradient(#f2c811,#f2c811) 0 100%/100% 9px no-repeat}
.v{margin:12px 0 10px 25px;line-height:34px}
h3{margin:30px 0 30px 30px;font-weight:500;font-size:32px;line-height:44px;color:#484644}`,
`<pane-header>Visualizations</pane-header><div class="grid">${['stackbar','stackcol','clusbar','cluscol','fullbar','fullcol','linec','area','stackarea','linestack','lineclus','ribbon','waterfall','funnel','scatter','pie','donut','treemap','map','filled','gauge','card','multirow','kpi','slicer','table','matrix','r','py','keyinf','decomp','qa','narrative','paginated','arcgis','apps','automate','more'].map(n => `<button aria-label="${n}">${ic(n)}</button>`).join('')}</div>
<div class="tabs"><button class="on" aria-label="Fields">${ic('fieldswell')}</button><button aria-label="Format">${ic('roller')}</button></div>
<div class="v">Values</div><drop-well style="height:61px;padding-left:20px">Add data fields here</drop-well>
<h3>Drill through</h3><toggle-row>Cross-report</toggle-row><toggle-row on style="margin-top:40px">Keep all filters</toggle-row>
<drop-well style="height:55px;margin-top:28px;padding-left:16px">Add drill-through fields here</drop-well>`);

define('field-row', `:host{display:flex;align-items:center;height:51px;padding-left:8px;line-height:51px;white-space:nowrap;color:#3b3a39}
svg-icon:nth-of-type(2){margin:0 12px 0 -1px}`, `${ic('expand')}${ic('grid')}<slot></slot>`);

define('highlight-frame', `:host{position:absolute;inset:-9px 2px 21px 0;border:14px solid #be2026;pointer-events:none}`, '');

define('fields-pane', `:host{display:block;width:379px;position:relative}
.s{display:flex;align-items:center;gap:13px;margin:0 14px;height:58px;padding-left:12px;background:#fff;border:solid #797775;border-width:3px 0}
input{flex:1;min-width:0;font-size:28px;height:50px;outline:0}input::placeholder{color:#484644;opacity:1}
.list{margin:14px 14px 0;padding-top:19px;border-top:2px solid #e1dfdd}
pane-header{padding:1px 14px 0 28px}`,
`<pane-header>Fields</pane-header><label class="s">${ic('search')}<input type="search" placeholder="Search" aria-label="Search fields"></label>
<div class="list"><field-row>CSV Fiscal Year Revenu...</field-row><field-row>CSV Monthly Revenue -...</field-row><field-row>CSV Raw Data FY - Rev...</field-row><field-row>CSV Raw Data Monthly...</field-row></div><highlight-frame></highlight-frame>`);

define('report-app', `:host{display:flex;height:100vh}
.edge{width:2px;flex:none;background:linear-gradient(#00b2d8 0 71px,#7fba7a 71px 164px,#b5dab5 164px 240px,#fff 240px 938px,#f04a3c 938px 942px,#fff 942px 1700px,#006a8c 1700px)}
.app{flex:1;min-width:0;display:flex;flex-direction:column}
.main{display:flex;flex:1;min-height:0}.left{flex:1;min-width:0;display:flex;flex-direction:column}
.canvas{display:flex;flex:1;min-height:0;background:#fff}
.sl{width:30px;background:linear-gradient(90deg,#fff 30%,#e4e4e4)}.sr{width:32px;background:linear-gradient(90deg,#e8e8e8,#fff 70%)}`,
`<div class="edge"></div><div class="app"><app-ribbon></app-ribbon><div class="main"><view-rail></view-rail><div class="left"><div class="canvas"><div class="sl"></div><report-page></report-page><div class="sr"></div><filters-rail></filters-rail></div><page-tabs></page-tabs></div><viz-pane></viz-pane><fields-pane></fields-pane></div></div>`);
</script>
</body>
</html>
